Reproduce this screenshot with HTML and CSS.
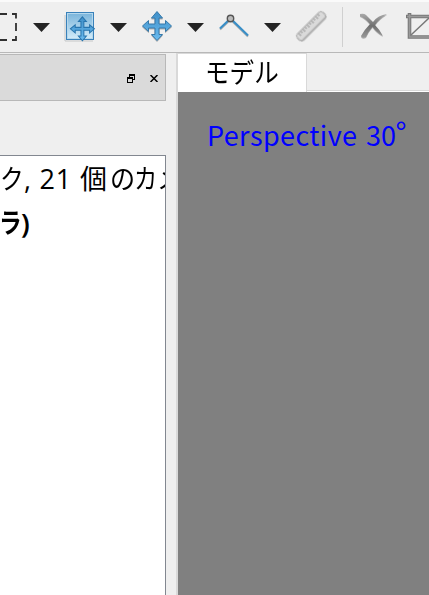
FILE: index.html
```html
<!DOCTYPE html>
<html lang="ja">
<head>
<meta charset="utf-8">
<title>モデル</title>
<link rel="stylesheet" href="styles.css">
</head>
<body>
<div class="app">
  <header class="toolbar">
    <div class="tool">
      <svg class="icon" viewBox="0 0 32 32"><path d="M12 4H20M25 4H29V8.500M29 13V21M29 26V30H25M20 30H12" fill="none" stroke="#303030" stroke-width="1.8"/></svg>
      <svg class="arrow" viewBox="0 0 17 9"><path d="M0 0H17L8.5 9Z" fill="#242424"/></svg>
    </div>
    <div class="tool">
      <svg class="icon" viewBox="0 0 32 32"><defs><linearGradient id="pane" x2="0" y2="1"><stop stop-color="#78b3da"/><stop offset="1" stop-color="#d5edfa"/></linearGradient><linearGradient id="blue" x2="0" y2="1"><stop stop-color="#3f8fc8"/><stop offset="1" stop-color="#6bbcf0"/></linearGradient></defs>
        <path d="M1 5V31H29" fill="none" stroke="#c5c7c8"/>
        <rect x="2.5" y="2.5" width="27" height="27" fill="url(#pane)" stroke="#3981ba"/><rect x="3.5" y="3.5" width="25" height="25" fill="none" stroke="#b5d8ed"/>
        <path transform="translate(5.6 6) scale(.8)" d="M16 1L21 7H17.800V14.200H25V11L31 16L25 21V17.800H17.800V25H21L16 31L11 25H14.200V17.800H7V21L1 16L7 11V14.200H14.200V7H11Z" fill="url(#blue)" stroke="#2875ae" stroke-width="1.3"/></svg>
      <svg class="arrow" viewBox="0 0 17 9"><path d="M0 0H17L8.5 9Z" fill="#242424"/></svg>
    </div>
    <div class="tool">
      <svg class="icon" viewBox="0 0 32 32"><path class="shade" d="M16 1.500L21.500 8H18V14H24.5V10.500L30.500 16L24.5 21.500V18H18V24.5H21.500L16 30.500L10.500 24.5H14V18H7.5V21.500L1.500 16L7.5 10.500V14H14V8H10.500Z" fill="url(#blue)" stroke="#3679aa"/></svg>
      <svg class="arrow" viewBox="0 0 17 9"><path d="M0 0H17L8.5 9Z" fill="#242424"/></svg>
    </div>
    <div class="tool">
      <svg class="icon" viewBox="0 0 32 32"><path class="shade" d="M2 18.5L12.5 8.5L30 25.5" fill="none" stroke="#388ec7" stroke-width="2.2"/><circle cx="12.5" cy="8.5" r="3.2" fill="#bbb" stroke="#555" stroke-width="1.4"/></svg>
      <svg class="arrow" viewBox="0 0 17 9"><path d="M0 0H17L8.5 9Z" fill="#242424"/></svg>
    </div>
    <svg class="icon" viewBox="0 0 32 32"><g class="shade" transform="rotate(-45 16 16)"><rect x="-2" y="12" width="36" height="8" rx="2.500" fill="#dadada" stroke="#aaa"/><path d="M2 12.5V16M5 12.5V15M8 12.5V16M11 12.5V15M14 12.5V16M17 12.5V15M20 12.5V16M23 12.5V15M26 12.5V16M29 12.5V15" stroke="#888" stroke-width=".8"/></g></svg>
    <span class="separator"></span>
    <svg class="icon cross" viewBox="0 0 32 32"><defs><linearGradient id="gray" x2="0" y2="1"><stop stop-color="#aaa"/><stop offset=".5" stop-color="#707070"/><stop offset="1" stop-color="#999"/></linearGradient></defs><path class="shade" d="M2 4Q6 3 8 5L15 12Q20 5 29 4Q21 9 17 15Q22 20 25 26Q19 23 14.5 17Q10 22 8 27Q4 29 3 26Q7 19 12 14Q7 8 2 6Z" fill="url(#gray)"/></svg>
    <svg class="icon crop" viewBox="0 0 32 32"><g fill="none"><path d="M5.5 3V27H31M2 6.500H27V32" stroke="#777" stroke-width="3.6"/><path d="M5.500 4V27H31M3 6.500H27" stroke="#9a9a9a" stroke-width="1.6"/><path d="M7 25L25 8" stroke="#777" stroke-width="1.5"/></g></svg>
  </header>
  <main class="workspace">
    <aside class="dock">
      <div class="dock-title">
        <svg class="restore" viewBox="0 0 8 9" shape-rendering="crispEdges"><path d="M2.500 3V.5H7.500V5.500H6M2 1.500H8M.5 3.500H5.500V8.500H.5ZM0 4.500H6" fill="none" stroke="#000"/></svg>
        <svg class="close" viewBox="0 0 8 7"><path d="M.5 0L7.500 7M7.500 0L.5 7" stroke="#000" stroke-width="1.500"/></svg>
      </div>
      <div class="tree">
        <div class="row"><span class="kana-ku">ク</span><span class="count">, 21 </span><span class="ko">個</span><span class="no">の</span><span class="ka">カ</span><span class="me">メ</span></div>
        <div class="row end"><span class="ra">ラ</span><span>)</span></div>
      </div>
    </aside>
    <section class="model">
      <div class="tabs"><div class="tab"><span>モデル</span></div><div class="tab-rest"></div></div>
      <div class="viewport"><span class="projection">Perspective</span><span class="angle">30</span><span class="degree">°</span></div>
    </section>
  </main>
</div>
</body>
</html>
```
FILE: styles.css
```css
* { box-sizing: border-box; }
body { margin: 0; overflow: hidden; background: #efefef; font-family: "Noto Sans", "Noto Sans CJK JP", sans-serif; color: #000; }
.app { width: 429px; height: 595px; display: flex; flex-direction: column; overflow: hidden; }
.toolbar { height: 53px; flex: none; display: flex; align-items: flex-start; padding-top: 8px; border-top: 2px solid #fafafa; border-bottom: 1px solid #b8b8b8; margin-left: -13px; width: 455px; }
.tool { width: 77px; flex: none; display: flex; }
.icon { width: 32px; height: 32px; flex: none; display: block; }
.shade { filter: drop-shadow(0 1px .6px #0004); }
.arrow { width: 17px; height: 9px; margin: 13px 0 0 14px; }
.separator { width: 1px; height: 40px; flex: none; margin: -3px 15px 0 15px; background: #d0d0d0; }
.crop { margin-left: 14px; }
.workspace { flex: 1; min-height: 0; display: flex; }
.dock { width: 166px; display: flex; flex-direction: column; margin-right: 10px; padding-top: 1px; }
.dock-title { height: 47px; flex: none; display: flex; justify-content: flex-end; background: #dadada; border: 1px solid #b8b8b8; border-left: 0; padding: 19px 7px 0 0; }
.restore { width: 8px; height: 9px; }
.close { width: 8px; height: 7px; margin: 1px 0 0 15px; }
.tree { flex: 1; margin-top: 54px; background: #fff; border: solid #828790; border-width: 1px 1px 0 0; overflow: hidden; padding-top: 1px; }
.row { height: 44px; line-height: 44px; white-space: pre; font-size: 27px; display: flex; }
.row > span { flex: none; display: block; transform-origin: left center; }
.kana-ku { width: 24px; transform: scaleX(.88); }
.count { width: 55px; font-family: "Open Sans", sans-serif; letter-spacing: .8px; }
.ko { width: 30px; margin-left: 1px; }
.no { width: 24px; transform: scaleX(.93); }
.ka { width: 23px; transform: scaleX(.86); }
.me { width: 24px; transform: scaleX(.9); }
.end { font-weight: 600; }
.ra { width: 22px; margin-left: -1px; transform: scaleX(.84); }
.tab span { display: block; transform-origin: left center; transform: scaleX(.91); }
.model { flex: 1; display: flex; flex-direction: column; border-left: 2px solid #d9d9d9; }
.tabs { height: 39px; flex: none; display: flex; background: #fff; }
.tab { width: 129px; height: 39px; padding-left: 27px; line-height: 38px; background: #fff; border-top: 1px solid #d9d9d9; border-right: 1px solid #d9d9d9; font-size: 27px; white-space: nowrap; }
.tab-rest { flex: 1; height: 38px; background: #efefef; border-bottom: 1px solid #d9d9d9; }
.viewport { flex: 1; background: #808080; padding: 23px 0 0 29px; color: #00f; font-family: "Noto Sans CJK JP", sans-serif; font-size: 27px; line-height: 40px; white-space: nowrap; display: flex; align-items: flex-start; }
.projection { width: 159px; letter-spacing: .4px; }
.angle { width: 31px; }
.degree { font-family: "Liberation Sans", sans-serif; font-size: 30px; margin-top: -3px; margin-left: -2px; }
```
